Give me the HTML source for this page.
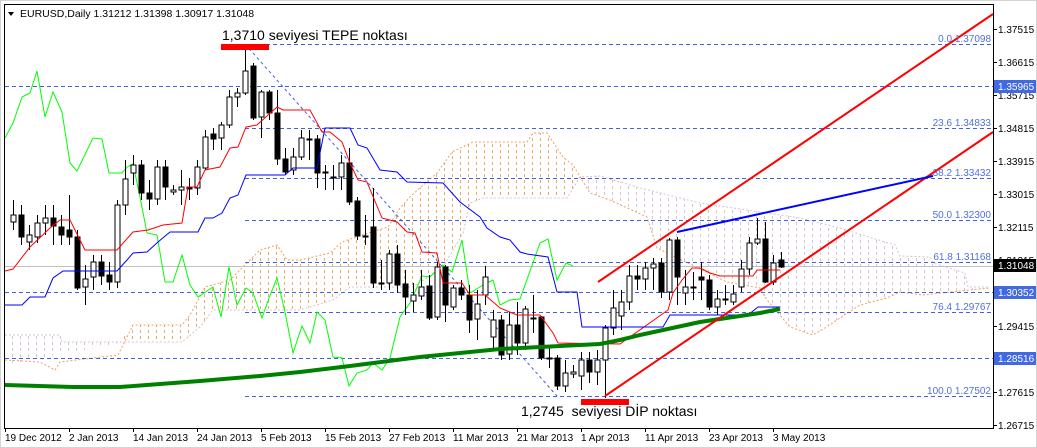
<!DOCTYPE html>
<html><head><meta charset="utf-8"><style>
html,body{margin:0;padding:0;background:#fff;}
svg{display:block;font-family:"Liberation Sans",Arial,sans-serif;}
</style></head><body>
<svg id="s" width="1037" height="448" viewBox="0 0 1037 448" xmlns="http://www.w3.org/2000/svg">
<defs>
<pattern id="hO" x="0.5" y="0" width="8" height="6" patternUnits="userSpaceOnUse">
<line x1="4" y1="0" x2="4" y2="3" stroke="#f0a868" stroke-width="1" shape-rendering="crispEdges"/>
</pattern>
<pattern id="hL" x="0.5" y="0" width="8" height="6" patternUnits="userSpaceOnUse">
<line x1="4" y1="0" x2="4" y2="3" stroke="#d8c0d8" stroke-width="1" shape-rendering="crispEdges"/>
</pattern>
</defs>
<rect x="0" y="0" width="1037" height="448" fill="#fff"/>
<rect x="0.5" y="0.5" width="1036" height="447" fill="none" stroke="#d4d4d4"/>
<!-- cloud -->
<polygon fill="url(#hL)" points="5,335 60,335 62,342 118,342 125,342 5,365"/>
<polygon fill="url(#hO)" points="118,342 133,325 182,325 190,315 205,287 230,280 238,272 260,250 277,245 287,260 300,260 330,253 342,242 362,235 388,227 400,208 412,195 437,173 452,152 473,142 527,142 533,133 547,133 563,157 573,165 580,177 567,198 483,198 470,203 463,233 443,267 413,287 350,287 333,300 300,310 213,310 200,327 182,342"/>
<polygon fill="url(#hL)" points="580,177 600,176 640,188 700,203 760,212 800,218 840,228 885,242 895,245 900,256 930,257 933,263 965,273 968,287 990,287 990,288 960,291 923,295 900,292 887,298 860,305 840,318 825,328 813,335 790,327 767,300 760,288 727,282 667,253 657,248 647,217 610,200 590,193"/>
<polyline fill="none" stroke="#f0a060" stroke-dasharray="2,2" points="5,360 40,362 55,370 60,362 118,355 133,325 182,325 190,315 205,287 230,280 238,272 260,250 277,245 287,260 300,260 330,253 342,242 362,235 388,227 400,208 412,195 437,173 452,152 473,142 527,142 533,133 547,133 563,157 573,165 590,193 610,200 647,217 657,248 667,253 727,282 760,288 767,300 790,327 813,335 825,328 840,318 860,305 887,298 900,292 923,295 960,291 990,288"/>
<polyline fill="none" stroke="#d8c0d8" stroke-dasharray="2,2" points="5,335 60,335 62,342 182,342 200,327 213,310 300,310 333,300 350,287 413,287 443,267 463,233 470,203 483,198 567,198 580,177 600,176 640,188 700,203 760,212 800,218 840,228 885,242 895,245 900,256 930,257 933,263 965,273 968,287 990,287"/>
<!-- dashed horizontal levels -->
<g stroke="#4060e0" stroke-dasharray="4,3" stroke-width="1">
<line x1="245" y1="44.5" x2="993" y2="44.5"/>
<line x1="5" y1="86.5" x2="993" y2="86.5"/>
<line x1="245" y1="128.5" x2="993" y2="128.5"/>
<line x1="245" y1="178.5" x2="993" y2="178.5"/>
<line x1="245" y1="220.5" x2="993" y2="220.5"/>
<line x1="245" y1="262.5" x2="993" y2="262.5"/>
<line x1="5" y1="292.5" x2="993" y2="292.5"/>
<line x1="245" y1="312.5" x2="993" y2="312.5"/>
<line x1="5" y1="358.5" x2="993" y2="358.5"/>
<line x1="245" y1="396.5" x2="993" y2="396.5"/>
</g>
<line x1="5" y1="266.5" x2="993" y2="266.5" stroke="#c0c0c0"/>
<line x1="245" y1="44" x2="557" y2="396" stroke="#4060e0" stroke-dasharray="3,3"/>
<!-- green chikou -->
<polyline fill="none" stroke="#00ff00" points="5,138 13,123 22,97 30,93 37,71 45,117 53,92 62,112 70,163 77,171 93,138 102,139 109,173 122,173 127,167 133,164 140,197 147,233 157,235 165,282 173,282 182,255 190,285 198,297 213,287 221,317 229,267 237,305 246,288 253,293 262,318 269,298 277,278 285,312 293,353 302,326 310,343 317,312 325,320 333,357 342,358 349,386 357,373 367,370 373,363 382,370 390,358 400,317 410,303 422,276 430,277 437,270 443,265 452,272 462,240 470,293 483,285 493,280 500,305 510,300 520,299 540,243 548,239 557,280 566,263 573,266"/>
<g id="candles"></g>
<!-- tenkan -->
<polyline fill="none" stroke="#ff0000" points="5,271 13,269 30,247 50,228 60,220 70,220 85,250 117,250 133,232 148,230 163,225 182,223 188,187 197,187 205,170 220,167 230,148 238,147 246,127 257,125 277,107 283,110 310,110 322,132 330,132 342,142 350,163 358,180 367,182 382,218 397,222 407,232 415,233 422,252 437,253 443,283 462,283 470,295 485,295 500,308 517,315 540,315 553,333 558,343 620,344 668,310 673,293 682,280 692,268 700,268 710,273 720,276 753,276 757,270 780,270"/>
<!-- kijun -->
<polyline fill="none" stroke="#0000ff" points="5,305 22,305 30,297 45,297 53,278 63,271 117,271 127,260 133,253 147,252 158,242 170,232 198,232 205,218 213,218 222,213 230,198 238,195 246,175 285,175 293,168 317,168 325,128 350,128 358,145 367,148 380,170 397,172 407,182 443,183 460,202 480,217 487,228 500,237 510,240 520,252 527,254 548,257 557,292 577,292 582,327 663,327 670,315 748,315 758,307 780,307"/>
<!-- SMA thick green -->
<polyline fill="none" stroke="#008000" stroke-width="4" points="5,385 73,387 120,387 160,384 200,381 260,376 300,372 350,366 420,357 500,349 560,346 600,344 620,340 640,335 700,322 760,313 780,309"/>
<!-- channels -->
<line x1="605" y1="396" x2="993" y2="132" stroke="#ff0000" stroke-width="2"/>
<line x1="598" y1="282" x2="993" y2="14" stroke="#ff0000" stroke-width="2"/>
<line x1="677" y1="232" x2="933" y2="176" stroke="#0000ff" stroke-width="2"/>
<!-- annotations -->
<rect x="221" y="44" width="48" height="6" fill="#ff0000"/>
<text x="222" y="40" font-size="14" fill="#000">1,3710 seviyesi TEPE noktası</text>
<rect x="581" y="399" width="48" height="6" fill="#ff0000"/>
<text x="521" y="416" font-size="14" fill="#000" xml:space="preserve">1,2745  seviyesi DİP noktası</text>
<!-- fibo labels -->
<g font-size="10" fill="#5070e0" text-anchor="end">
<text x="991" y="42">0.0 1.37098</text>
<text x="991" y="126">23.6 1.34833</text>
<text x="991" y="176">38.2 1.33432</text>
<text x="991" y="218">50.0 1.32300</text>
<text x="991" y="260">61.8 1.31168</text>
<text x="991" y="310">76.4 1.29767</text>
<text x="991" y="394">100.0 1.27502</text>
</g>
<!-- frame -->
<rect x="4.5" y="4.5" width="989" height="424" fill="none" stroke="#000"/>
<!-- header -->
<polygon points="8,12 14,12 11,16" fill="#000"/>
<text x="20" y="17" font-size="10.5" fill="#000">EURUSD,Daily  1.31212 1.31398 1.30917 1.31048</text>
<!-- right axis -->
<g font-size="10" fill="#000">
<text x="998" y="33">1.37515</text>
<text x="998" y="66">1.36615</text>
<text x="998" y="99">1.35715</text>
<text x="998" y="132">1.34815</text>
<text x="998" y="165">1.33915</text>
<text x="998" y="198">1.33015</text>
<text x="998" y="231">1.32115</text>
<text x="998" y="264">1.31215</text>
<text x="998" y="330">1.29415</text>
<text x="998" y="396">1.27615</text>
<text x="998" y="429">1.26715</text>
</g>
<g stroke="#000"><line x1="994" y1="29.5" x2="997" y2="29.5"/><line x1="994" y1="62.5" x2="997" y2="62.5"/><line x1="994" y1="95.5" x2="997" y2="95.5"/><line x1="994" y1="128.5" x2="997" y2="128.5"/><line x1="994" y1="161.5" x2="997" y2="161.5"/><line x1="994" y1="194.5" x2="997" y2="194.5"/><line x1="994" y1="227.5" x2="997" y2="227.5"/><line x1="994" y1="260.5" x2="997" y2="260.5"/><line x1="994" y1="326.5" x2="997" y2="326.5"/><line x1="994" y1="392.5" x2="997" y2="392.5"/><line x1="994" y1="425.5" x2="997" y2="425.5"/></g>
<rect x="994" y="80" width="42" height="13" fill="#4169e1"/><text x="998" y="90" font-size="10" fill="#fff">1.35965</text>
<rect x="994" y="259" width="42" height="13" fill="#000"/><text x="998" y="269" font-size="10" fill="#fff">1.31048</text>
<rect x="994" y="286" width="42" height="13" fill="#4169e1"/><text x="998" y="296" font-size="10" fill="#fff">1.30352</text>
<rect x="994" y="352" width="42" height="13" fill="#4169e1"/><text x="998" y="362" font-size="10" fill="#fff">1.28516</text>
<!-- bottom axis -->
<g font-size="10" fill="#000">
<text x="5" y="441">19 Dec 2012</text><text x="69" y="441">2 Jan 2013</text><text x="133" y="441">14 Jan 2013</text><text x="197" y="441">24 Jan 2013</text><text x="261" y="441">5 Feb 2013</text><text x="325" y="441">15 Feb 2013</text><text x="389" y="441">27 Feb 2013</text><text x="453" y="441">11 Mar 2013</text><text x="517" y="441">21 Mar 2013</text><text x="581" y="441">1 Apr 2013</text><text x="645" y="441">11 Apr 2013</text><text x="709" y="441">23 Apr 2013</text><text x="773" y="441">3 May 2013</text>
</g>
<g stroke="#000"><line x1="5.5" y1="428" x2="5.5" y2="432"/><line x1="69.5" y1="428" x2="69.5" y2="432"/><line x1="133.5" y1="428" x2="133.5" y2="432"/><line x1="197.5" y1="428" x2="197.5" y2="432"/><line x1="261.5" y1="428" x2="261.5" y2="432"/><line x1="325.5" y1="428" x2="325.5" y2="432"/><line x1="389.5" y1="428" x2="389.5" y2="432"/><line x1="453.5" y1="428" x2="453.5" y2="432"/><line x1="517.5" y1="428" x2="517.5" y2="432"/><line x1="581.5" y1="428" x2="581.5" y2="432"/><line x1="645.5" y1="428" x2="645.5" y2="432"/><line x1="709.5" y1="428" x2="709.5" y2="432"/><line x1="773.5" y1="428" x2="773.5" y2="432"/></g>
</svg>
<script>
var d=[null,[215,222,200,230,0],[215,237,205,245,1],[235,242,225,250,0],[223,237,215,243,0],[218,223,205,235,0],[218,226,205,245,1],[227,235,215,245,1],[230,237,195,245,1],[237,288,230,290,1],[279,287,265,305,0],[262,277,255,290,0],[262,276,255,285,1],[275,282,262,290,1],[205,282,200,288,0],[179,205,160,215,0],[165,173,155,185,0],[165,193,160,200,1],[193,199,180,210,1],[167,199,160,205,0],[167,187,160,200,1],[190,192,185,195,0],[187,190,170,205,0],[187,189,178,200,1],[167,188,160,195,0],[137,168,130,170,0],[134,139,128,150,1],[125,138,122,150,0],[97,125,90,128,0],[93,97,88,107,0],[71,93,44,95,0],[66,118,63,120,1],[92,117,90,138,0],[92,113,90,120,1],[113,159,90,165,1],[159,172,148,175,1],[157,170,148,175,0],[138,157,130,160,0],[139,140,130,160,1],[139,173,135,188,1],[172,173,165,190,1],[177,178,165,190,1],[163,177,155,190,0],[163,202,148,205,1],[201,236,197,240,1],[236,237,215,245,1],[227,283,188,288,1],[283,284,260,290,1],[254,283,250,290,0],[254,285,245,293,1],[284,297,270,315,1],[295,301,283,312,0],[287,296,270,300,0],[286,318,275,320,1],[267,317,262,320,0],[267,305,265,322,1],[288,307,285,310,0],[288,295,280,300,1],[295,320,285,333,1],[304,319,290,340,0],[277,295,266,305,0],[320,337,310,350,0],[320,355,315,360,1],[325,354,312,360,0],[325,343,302,355,1],[309,343,306,350,0],[318,319,295,333,1],[317,358,316,360,1],[358,359,345,368,1],[358,386,355,390,1],[373,386,360,392,0],[372,374,365,378,0],[360,376,352,390,0],[360,372,352,383,1],[360,372,350,385,0],[328,360,325,398,0],[308,328,290,335,0],[302,316,290,330,0],[276,302,265,310,0],[276,279,265,290,1],[268,279,262,290,0],[264,268,258,290,0],[263,292,258,298,1],[240,292,238,300,0],[240,277,237,305,1],[287,293,270,305,0],[287,288,272,300,1],[277,280,262,300,1],[280,307,275,310,1],[299,307,290,315,0],[299,300,285,305,1],[294,302,285,305,0],[269,287,260,292,0],[243,269,237,275,0],[239,243,218,245,0],[239,282,222,283,1],[263,282,255,285,0],[260,267,252,268,1]];
var h='';for(var i=1;i<d.length;i++){var c=d[i],x=5+8*i;h+='<line x1="'+(x+.5)+'" y1="'+c[2]+'" x2="'+(x+.5)+'" y2="'+c[3]+'" stroke="#000"/>';h+='<rect x="'+(x-2)+'" y="'+c[0]+'" width="5" height="'+Math.max(1,c[1]-c[0])+'" fill="'+(c[4]?'#000':'#fff')+'" stroke="#000" stroke-width="1"/>';}
document.getElementById('candles').innerHTML=h;
</script>
</body></html>
